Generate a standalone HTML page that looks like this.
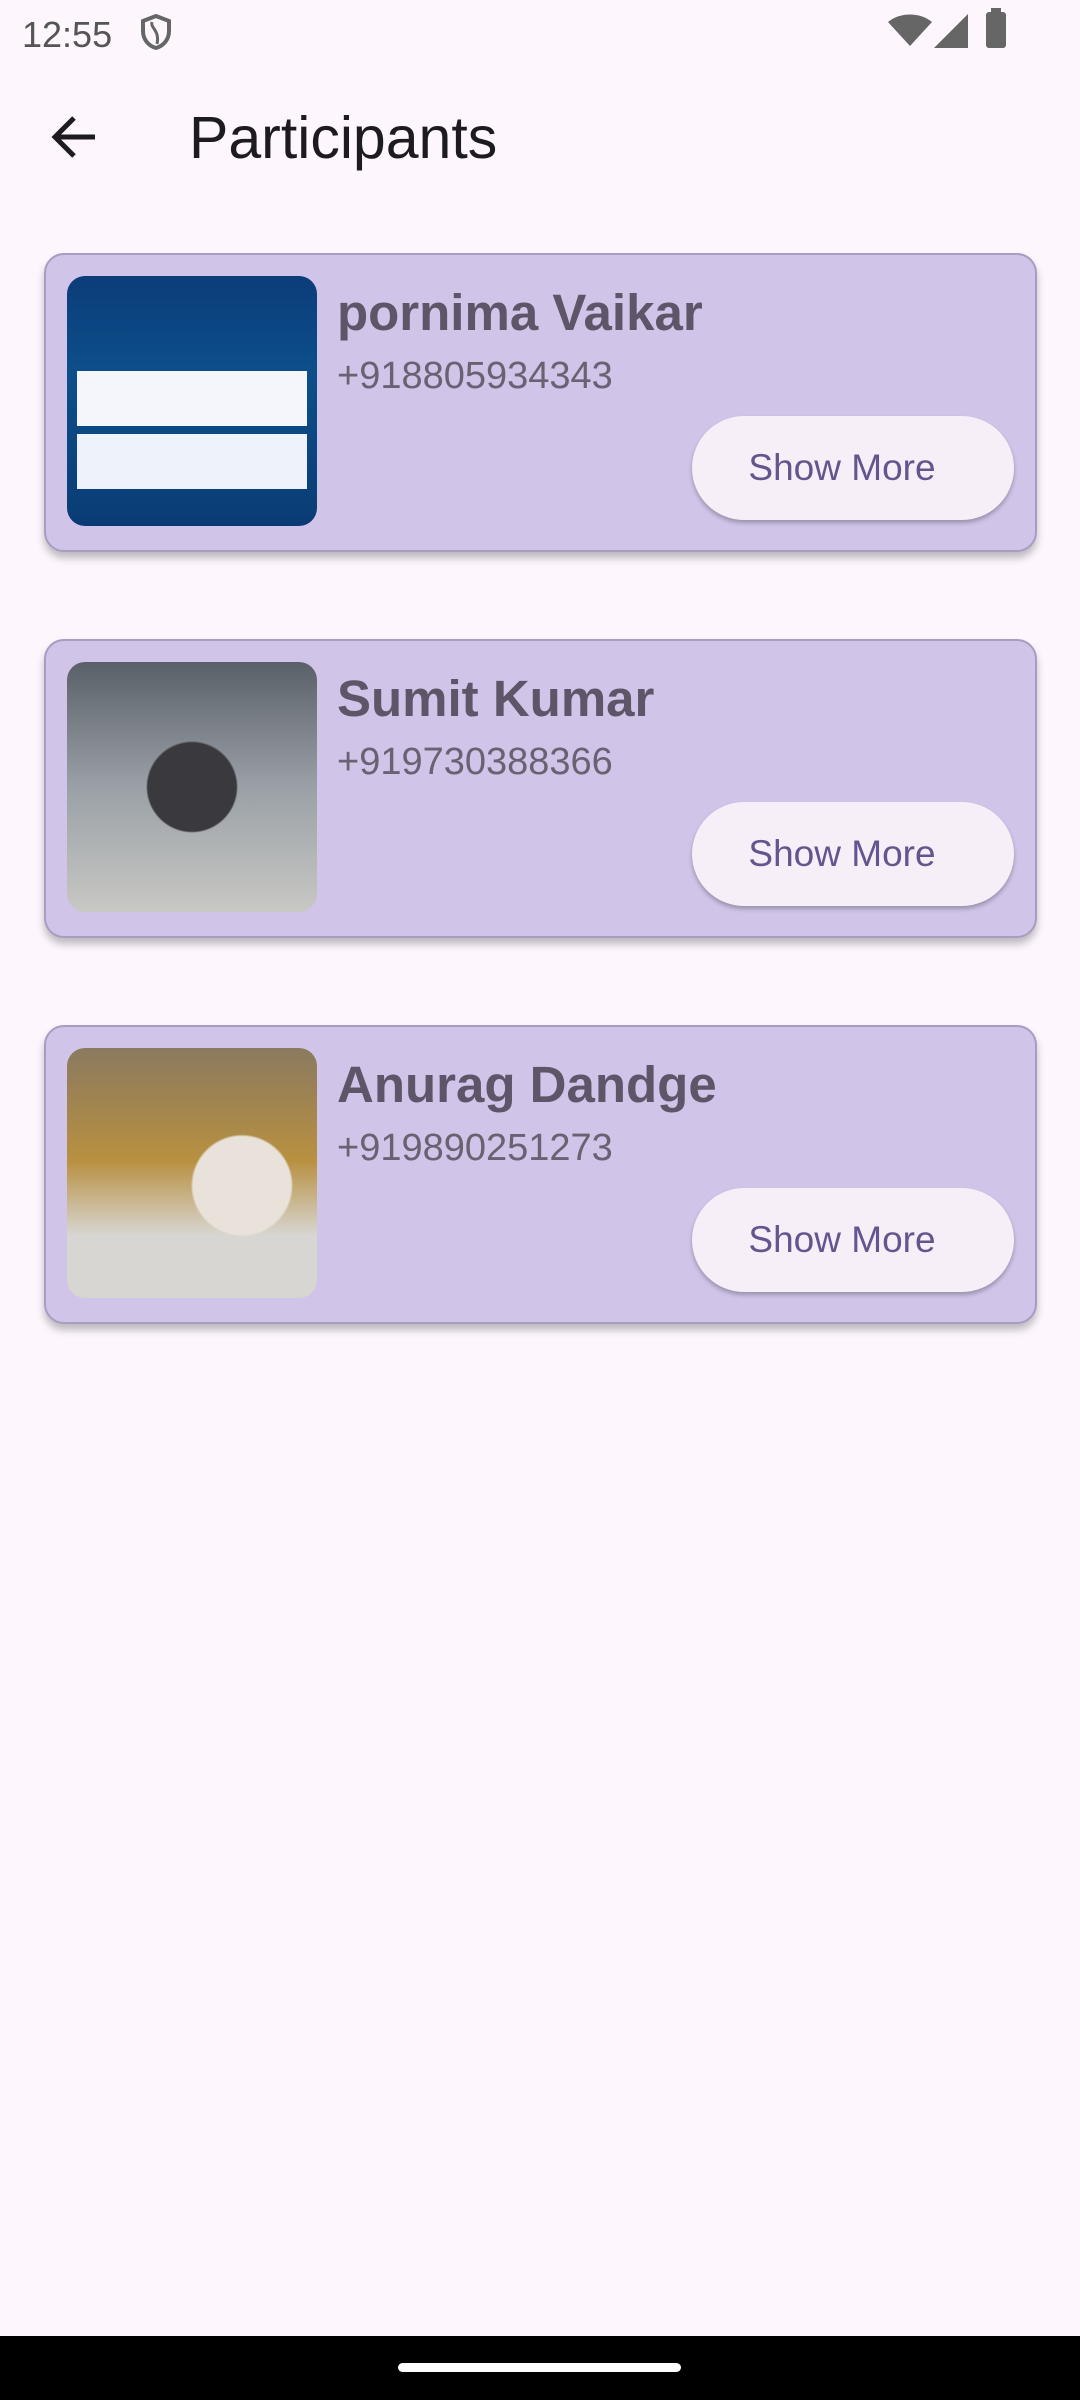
<!DOCTYPE html>
<html><head><meta charset="utf-8"><style>
*{margin:0;padding:0;box-sizing:border-box}
body{width:1080px;height:2400px;background:#fdf7fd;position:relative;overflow:hidden;font-family:"Liberation Sans",sans-serif}
.abs{position:absolute}
.card{position:absolute;left:44px;width:993px;height:299px;background:#d0c4e8;border:2px solid #a99cc3;border-radius:20px;box-shadow:0 6px 8px rgba(0,0,0,0.25)}
.img{position:absolute;left:21px;top:21px;width:250px;height:250px;border-radius:18px;overflow:hidden}
.name{position:absolute;left:291px;top:28px;font-size:51px;font-weight:bold;color:#5e5668;white-space:nowrap}
.phone{position:absolute;left:291px;top:100px;font-size:38px;color:#6a6272;white-space:nowrap}
.btn{position:absolute;left:646px;top:161px;width:322px;height:104px;border-radius:52px;background:#f6eff8;box-shadow:0 3px 4px rgba(0,0,0,0.25);color:#65558f;font-size:37px;text-align:center;line-height:104px;padding-right:22px}
</style></head><body>
<div class="abs" style="left:22px;top:14px;font-size:36px;color:#555">12:55</div>
<svg class="abs" style="left:140px;top:14px" width="32" height="36" viewBox="0 0 32 36"><path d="M16 2 L29 7 V17 C29 26 23 32 16 34 C9 32 3 26 3 17 V7 Z" fill="none" stroke="#666" stroke-width="4"/><path d="M12 8 C10 14 20 16 17 30" fill="none" stroke="#666" stroke-width="3"/></svg>
<svg class="abs" style="left:888px;top:14px" width="44" height="34" viewBox="0 0 44 34"><path d="M22 32 L0 8 C12 -2 32 -2 44 8 Z" fill="#666"/></svg>
<svg class="abs" style="left:934px;top:14px" width="34" height="34" viewBox="0 0 34 34"><path d="M34 0 V34 H0 Z" fill="#666"/></svg>
<div class="abs" style="left:986px;top:12px;width:20px;height:36px;background:#666;border-radius:3px"></div>
<div class="abs" style="left:991px;top:8px;width:10px;height:6px;background:#666"></div>
<svg class="abs" style="left:50px;top:114px" width="48" height="46" viewBox="0 0 48 46"><path d="M45 23 H6 M24 4 L5 23 L24 42" fill="none" stroke="#1d1b20" stroke-width="5"/></svg>
<div class="abs" style="left:189px;top:104px;font-size:59px;color:#1d1b20">Participants</div>

<div class="card" style="top:253px">
<div class="img" style="background:linear-gradient(180deg,#0b3d7a,#0d4f8a 40%,#0a3c74)"><div class="abs" style="left:10px;top:95px;width:230px;height:55px;background:#f4f6fb"></div><div class="abs" style="left:10px;top:158px;width:230px;height:55px;background:#eef2fa"></div></div>
<div class="name">pornima Vaikar</div><div class="phone">+918805934343</div><div class="btn">Show More</div></div>

<div class="card" style="top:639px">
<div class="img" style="background:radial-gradient(circle at 50% 50%,#3a3a3e 0 25%,transparent 26%),linear-gradient(180deg,#5a6068,#9aa0a6 50%,#c8c8c4)"></div>
<div class="name">Sumit Kumar</div><div class="phone">+919730388366</div><div class="btn">Show More</div></div>

<div class="card" style="top:1025px">
<div class="img" style="background:radial-gradient(circle at 70% 55%,#e8e2da 0 22%,transparent 23%),linear-gradient(180deg,#8a7a60,#b89040 45%,#d8d6d2 75%)"></div>
<div class="name">Anurag Dandge</div><div class="phone">+919890251273</div><div class="btn">Show More</div></div>

<div class="abs" style="left:0;top:2336px;width:1080px;height:64px;background:#000"></div>
<div class="abs" style="left:398px;top:2363px;width:283px;height:9px;border-radius:5px;background:#fff"></div>
</body></html>
